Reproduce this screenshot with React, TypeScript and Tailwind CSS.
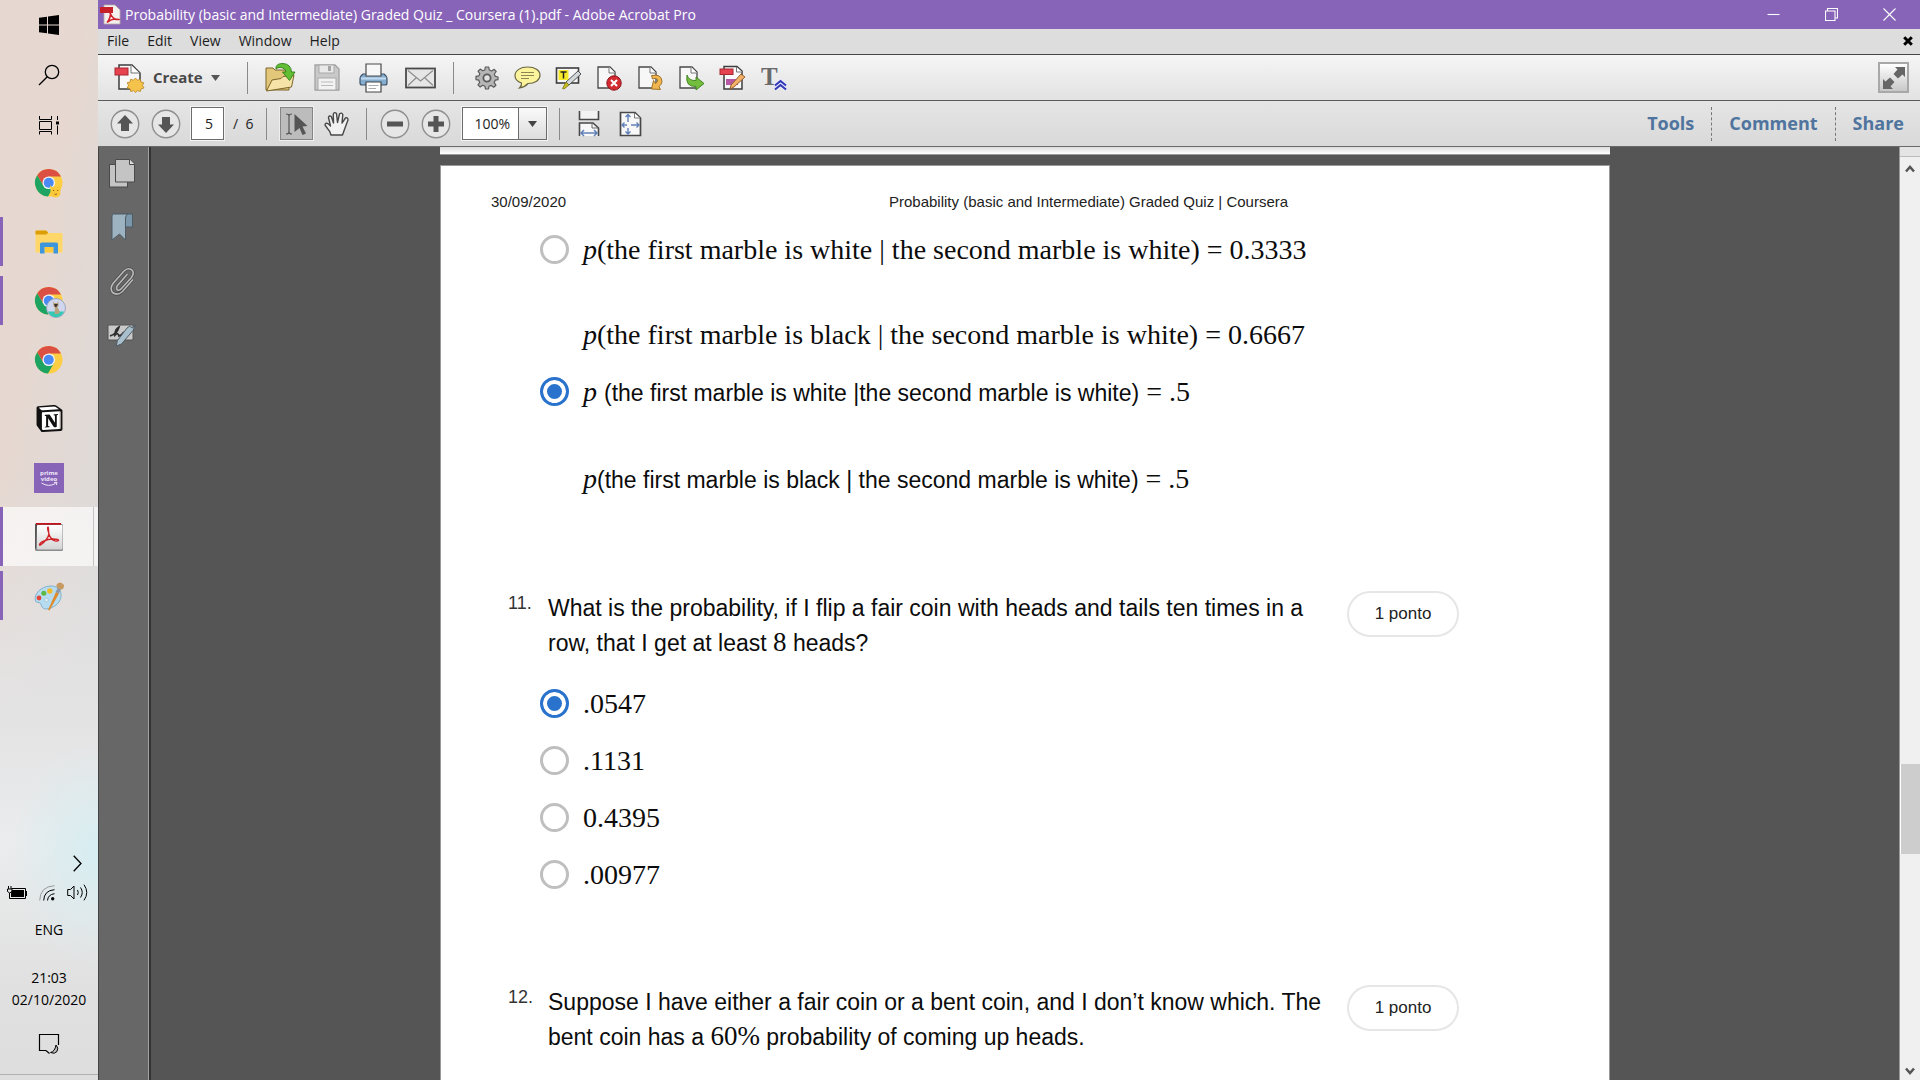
import React from "react";
import { SiNotion } from "react-icons/si";

const UI = "font-['Open_Sans','Noto_Sans',sans-serif]";
const SANS = "font-['Liberation_Sans',Arial,sans-serif]";
const SERIF = "font-['Liberation_Serif','Times_New_Roman',serif]";

/* ---------- Taskbar icons ---------- */

function Chrome({ children }: { children?: React.ReactNode }) {
  return (
    <svg width="34" height="34" viewBox="0 0 34 34" aria-hidden="true">
      <g transform="translate(3 3) scale(.573)">
        <circle cx="24" cy="24" r="24" fill="#fdce44" />
        <path d="M24 24V13.1H45.4A24 24 0 0 0 3.86 10.9L14.56 29.45Z" fill="#dc4f43" />
        <path d="M24 24L14.56 29.45L3.86 10.9A24 24 0 0 0 22.7 48L33.44 29.45Z" fill="#1da362" />
        <circle cx="24" cy="24" r="11" fill="#f4f4f4" />
        <circle cx="24" cy="24" r="8.7" fill="#4a8af4" />
      </g>
      {children}
    </svg>
  );
}

function WindowsLogo() {
  return (
    <svg width="20" height="20" viewBox="0 0 20 20" aria-hidden="true">
      <path d="M0 2.8L8 1.700V9.500H0ZM9 1.500L20 0V9.500H9ZM0 10.500H8V18.300L0 17.200ZM9 10.500H20V20L9 18.500Z" />
    </svg>
  );
}

function SearchIcon() {
  return (
    <svg width="22" height="22" viewBox="0 0 22 22" fill="none" stroke="#000" strokeWidth="1.3" aria-hidden="true">
      <circle cx="14" cy="8" r="6.700" />
      <path d="M9.300 12.700L1 21" />
    </svg>
  );
}

function TaskViewIcon() {
  return (
    <svg width="20" height="20" viewBox="0 0 20 20" fill="none" stroke="#000" aria-hidden="true">
      <path d="M.5 1V4.500H12.500V1M.5 19.500V16.500H12.500V19.500M.5 6.500H12.500V14.500H.5ZM18.500 1V5M18.500 10.500V19.500" />
      <rect x="17" y="6.500" width="3" height="3" fill="#000" stroke="none" />
    </svg>
  );
}

function FolderIcon() {
  return (
    <svg width="28" height="24" viewBox="0 0 28 24" aria-hidden="true">
      <path d="M.5 1.500Q.5 .5 1.500 .5H11L13.500 3H26.500Q27.500 3 27.500 4V22.500H.5Z" fill="#ffd768" />
      <path d="M.5 1.500Q.5 .5 1.500 .5H11L13.300 2.500L11.500 4.500H.5Z" fill="#dd9d05" />
      <path d="M5 23.500V14Q5 12.500 6.500 12.500H21.500Q23 12.500 23 14V23.500H18.500V17H9.500V23.500Z" fill="#3d96dc" />
      <rect x="10" y="17" width="8" height="5.500" fill="#ffc93c" />
    </svg>
  );
}

function PrimeIcon() {
  return (
    <svg width="30" height="30" viewBox="0 0 30 30" aria-hidden="true">
      <rect width="30" height="30" fill="#8864b8" />
      <text x="15" y="11.500" fontSize="6" fontWeight="700" textAnchor="middle" fill="#efe8f7" fontFamily="Open Sans">prime</text>
      <text x="15" y="18" fontSize="6" fontWeight="700" textAnchor="middle" fill="#efe8f7" fontFamily="Open Sans">video</text>
      <path d="M7.500 20Q14.500 24.500 21.500 20.500M20 19.500L23 19.300L22.300 22" fill="none" stroke="#efe8f7" strokeWidth="1" />
    </svg>
  );
}

const ACROBAT_A = "M14 5C12.500 5.500 14.600 10 15 12C14 16 10 20.500 6.500 23C4.500 24 5.500 20.800 9 19.300C13 17.500 19 16.500 23.500 17.500C26 18.200 24 19.600 21 18.800C18 17.800 15.500 14.500 14.800 11.500C14.300 9 15 6 14 5Z";

function AcrobatIcon() {
  return (
    <svg width="30" height="30" viewBox="0 0 30 30" aria-hidden="true">
      <defs>
        <linearGradient id="acro" x1="0" y1="0" x2="0" y2="1">
          <stop offset="0" stopColor="#fff" />
          <stop offset="1" stopColor="#d4d4d4" />
        </linearGradient>
      </defs>
      <rect x="1" y="2" width="28" height="27" rx="1.500" fill="#8b8b8b" />
      <rect x="3" y="3" width="25.500" height="24.500" rx="1" fill="url(#acro)" />
      <path d="M1 2.500L2 1H27V2.600H3L2 27L1 26Z" fill="#555" />
      <path d="M2 1H27V2.700H2Z" fill="#c3141c" />
      <path d={ACROBAT_A} fill="none" stroke="#cf2026" strokeWidth="1.300" />
    </svg>
  );
}

function PaintIcon() {
  return (
    <svg width="32" height="30" viewBox="0 0 32 30" aria-hidden="true">
      <path d="M2.500 20C.5 13 8 5.500 17 5C24 4.500 29 9 28 16C27 22.500 20 27.500 13 28C9 28 8.500 24.500 7.500 22.500C6 20.500 3.500 22.500 2.500 20Z" fill="#b5dcf1" stroke="#6ea4c4" strokeWidth=".8" />
      <circle cx="13.500" cy="19" r="1.700" fill="#eef6fa" stroke="#8ab" strokeWidth=".5" />
      <circle cx="6" cy="17" r="2.400" fill="#e2463b" />
      <circle cx="10.800" cy="12.300" r="2.500" fill="#5cb946" />
      <circle cx="16.800" cy="10" r="2.700" fill="#f3bb25" />
      <path d="M16.500 29.500L15 29L23 11L26 12.500Z" fill="#e08a2c" />
      <path d="M22.500 11L25 6.500L28 8L26 12.500Z" fill="#8d99a5" />
      <path d="M24.500 7C22 4.500 24 1.500 28 1.500L31 4C31 7 30 8.500 28 8.500Z" fill="#c79a63" />
    </svg>
  );
}

type TaskbarApp = { name: string; icon: React.ReactNode; running?: boolean; active?: boolean };

const APPS: TaskbarApp[] = [
  {
    name: "Chrome profile one",
    icon: (
      <Chrome>
        <path d="M18 19L20 21H26L27.500 18.500L28.500 25Q29 31 23.500 31.500Q17.500 31 18.500 25Z" fill="#fbc93a" />
        <path d="M21 24.500H22.200M25 24.500H26.200M22.500 28Q23.700 29 25 28" stroke="#9a5c12" strokeWidth="1" fill="none" />
      </Chrome>
    ),
  },
  { name: "File Explorer", icon: <FolderIcon />, running: true },
  {
    name: "Chrome profile two",
    icon: (
      <Chrome>
        <circle cx="24" cy="24" r="9.500" fill="#cfd6ee" stroke="#8e9bb5" strokeWidth=".8" />
        <path d="M15.800 27.500H32.200Q29.500 33 24 33.300Q18.500 33 15.800 27.500Z" fill="#35c9b4" />
        <path d="M21 17.500L22.500 19H25L26.500 17.500V22L25.500 23L28 28L26.500 30H22.500L23 24L21.500 22Z" fill="#b8a37f" />
        <path d="M22 20H26L24.500 23H23Z" fill="#3c3430" />
      </Chrome>
    ),
    running: true,
  },
  { name: "Chrome", icon: <Chrome /> },
  {
    name: "Notion",
    icon: (
      <span className="relative flex">
        <span className="absolute inset-x-1 inset-y-0.5 bg-white" />
        <SiNotion className="relative size-[27px] text-[#111]" />
      </span>
    ),
  },
  { name: "Prime Video", icon: <PrimeIcon /> },
  { name: "Adobe Acrobat", icon: <AcrobatIcon />, running: true, active: true },
  { name: "Paint", icon: <PaintIcon />, running: true },
];

function Taskbar() {
  return (
    <aside
      className={`${UI} flex w-[98px] shrink-0 flex-col bg-[radial-gradient(ellipse_90px_110px_at_100%_79%,#d6edf1_0%,transparent_100%),linear-gradient(180deg,transparent_0%,transparent_44%,#e4e4e5_68%,#ebeced_78%,#e0e0e0_92%,#dedede_100%),linear-gradient(100deg,#e6d8d1_30%,#d9dadb_85%)] text-[14px] text-black`}
    >
      {[
        { n: "Start", i: <WindowsLogo /> },
        { n: "Search", i: <SearchIcon /> },
        { n: "Task View", i: <TaskViewIcon /> },
      ].map((b) => (
        <button key={b.n} aria-label={b.n} className="flex h-[50px] items-center justify-center">
          {b.i}
        </button>
      ))}
      <nav className="mt-[3px] flex flex-col">
        {APPS.map((a) => (
          <button
            key={a.name}
            aria-label={a.name}
            className={`relative flex h-[59px] items-center justify-center ${a.active ? "bg-white/65" : ""}`}
          >
            {a.running && (
              <span className={`absolute left-0 w-[3px] bg-[#8864b8] ${a.active ? "inset-y-0" : "inset-y-[5px]"}`} />
            )}
            {a.active && <span className="absolute inset-y-0 right-1 w-px bg-[#c4c4c4]" />}
            {a.icon}
          </button>
        ))}
      </nav>
      <div className="mt-auto flex flex-col items-center">
        <button aria-label="Show hidden icons" className="mr-4 self-end">
          <svg width="9" height="17" viewBox="0 0 9 17" fill="none" stroke="#000" strokeWidth="1.3" aria-hidden="true">
            <path d="M.7 .7L8 8.500L.7 16.300" />
          </svg>
        </button>
        <div className="mt-3 flex items-center gap-3 pr-1">
          <svg width="20" height="14" viewBox="0 0 20 14" aria-hidden="true">
            <path d="M4.500 2.500H18.500V12.500H2.500V7" fill="none" stroke="#000" />
            <path d="M5 4H17V11H4V7Z" />
            <rect x="18.500" y="5" width="1.500" height="5" />
            <path d="M1.500 0V3M4 0V3M.5 3H5V5.500L2.700 7L.5 5.500Z" fill="none" stroke="#000" strokeWidth="1" />
          </svg>
          <svg width="16" height="16" viewBox="0 0 16 16" fill="none" stroke="#000" aria-hidden="true">
            <path d="M.7 15.500Q1 1.500 15.500 .7" stroke="#999" />
            <path d="M4.700 15.500Q5 5.500 15.500 4.700M8.500 15.500Q9 9.500 15.500 8.700" />
            <circle cx="13.700" cy="13.800" r="1.700" fill="#000" stroke="none" />
          </svg>
          <svg width="21" height="17" viewBox="0 0 21 17" fill="none" stroke="#000" aria-hidden="true">
            <path d="M.7 5.500H3.500L7 2V15L3.500 11.500H.7ZM10.500 6Q12 8.500 10.500 11M13.500 3.500Q17 8.500 13.500 13.500M17 .7Q22.500 8.500 17 16.300" />
          </svg>
        </div>
        <span className="mt-[18px] leading-[22px]">ENG</span>
        <span className="mt-[26px] leading-[22px]">21:03</span>
        <span className="leading-[22px]">02/10/2020</span>
        <button aria-label="Notifications" className="mt-[22px]">
          <svg width="22" height="22" viewBox="0 0 22 22" fill="none" stroke="#000" aria-hidden="true">
            <path d="M20.500 12V1.500H1.500V17.500H8L11.500 20.500" strokeWidth="1.200" />
            <path d="M18 12Q21 15 19 18.500Q16.500 21.500 12.500 19.500Q17 18.500 18 12Z" fill="#bbb" />
          </svg>
        </button>
        <div className="mt-[19px] mb-[5px] h-px w-full bg-[#b0b0b0]" />
      </div>
    </aside>
  );
}

/* ---------- Toolbar icons ---------- */

function Doc({ children }: { children?: React.ReactNode }) {
  return (
    <svg width="27" height="26" viewBox="0 0 27 26" aria-hidden="true">
      <path d="M2 2H14L19 7V23H2Z" fill="#f7f7f7" stroke="#484848" strokeWidth="1.300" />
      <path d="M13 2V8H19" fill="#fff" stroke="#777" strokeWidth="1" />
      {children}
    </svg>
  );
}

const CreateIcon = () => (
  <svg width="31" height="30" viewBox="0 0 31 30" aria-hidden="true">
    <path d="M5 2H18L26 10V26H5Z" fill="#f8f8f8" stroke="#3c3c3c" strokeWidth="1.500" />
    <path d="M17 2V10H25.500" fill="#fff" stroke="#777" />
    <rect x="1" y="5" width="13" height="7" fill="#e64250" stroke="#a82630" />
    <path d="M21.500 15L23.500 17.200L26.300 16.200L27 19L29.800 19.800L28.500 22.300L30 25L27.200 25.800L26.300 28.500L23.600 27.600L21.500 29.500L19.500 27.600L16.700 28.500L16 25.700L13.200 25L14.500 22.300L13.200 19.800L16 19L16.700 16.200L19.500 17.200Z" fill="#f5c24c" stroke="#b68421" strokeWidth=".8" />
  </svg>
);

const OpenIcon = () => (
  <svg width="32" height="31" viewBox="0 0 32 31" aria-hidden="true">
    <path d="M2 6H9L11 8H25V28H2Z" fill="#e2c67a" stroke="#7c6528" />
    <path d="M2.500 29L8 18L17 16.500L19 14.500L30 13L27.500 25Z" fill="#f6e3a8" stroke="#7c6528" strokeLinejoin="round" />
    <path d="M12 5Q13 1.500 19 1.500Q27 2 27.500 10H31L25.500 18.500L18.500 10H22Q21 5.500 16 5.500Q13.500 5.500 12 7Z" fill="#62bf34" stroke="#2f7d17" strokeWidth=".9" />
  </svg>
);

const SaveIcon = () => (
  <svg width="26" height="27" viewBox="0 0 26 27" aria-hidden="true">
    <path d="M1 1H21L25 5V26H1Z" fill="#c9c9c9" stroke="#a2a2a2" strokeWidth="1.300" />
    <path d="M5 1H20V9H5Z" fill="#e9e9e9" stroke="#a9a9a9" />
    <rect x="14" y="2" width="3" height="5" fill="#a5a5a5" />
    <rect x="4" y="14" width="18" height="12" fill="#f2f2f2" stroke="#aaa" />
    <path d="M7 18H19M7 21.500H19" stroke="#bbb" />
  </svg>
);

const PrintIcon = () => (
  <svg width="29" height="30" viewBox="0 0 29 30" aria-hidden="true">
    <path d="M4 11H25Q28 13 28 16V20Q28 22 26 22H3Q1 22 1 20V16Q1 13 4 11Z" fill="#85add0" stroke="#3e5267" strokeWidth="1.200" />
    <path d="M7 1H22V13H7Z" fill="#f7f7f7" stroke="#4a4a4a" strokeWidth="1.200" />
    <path d="M2 15.500H27" stroke="#c2daee" strokeWidth="2" />
    <path d="M7 19H22V29H7Z" fill="#fff" stroke="#454545" strokeWidth="1.200" />
    <path d="M9.500 22.500H19.500M9.500 25.500H17" stroke="#aaa" />
  </svg>
);

const MailIcon = () => (
  <svg width="31" height="22" viewBox="0 0 31 22" aria-hidden="true">
    <rect x="1" y="1.500" width="29" height="19" fill="#e6e6e6" stroke="#4a4a4a" strokeWidth="1.800" />
    <path d="M3 3.500L15.500 14L28 3.500M3 18.500L11.500 10.500M28 18.500L19.500 10.500" fill="none" stroke="#8d8d8d" strokeWidth="1.200" />
  </svg>
);

const GearIcon = () => (
  <svg width="24" height="24" viewBox="0 0 24 24" aria-hidden="true">
    <path d="M10.300 1H13.700L14.300 4L16.700 5L19.200 3.300L21.200 5.500L19.300 8L20.200 10.300L23 11V13.700L20.200 14.200L19.200 16.600L20.900 19.200L18.700 21.200L16.200 19.400L14 20.200L13.500 23H10.500L9.900 20.200L7.600 19.300L5.200 21L3 18.900L4.700 16.500L3.800 14.200L1 13.600V10.400L3.900 9.900L4.800 7.600L3.100 5.200L5.200 3.100L7.700 4.800L9.800 4Z" fill="#b6b6b6" stroke="#5a5a5a" strokeWidth="1.200" strokeLinejoin="round" />
    <circle cx="12" cy="12" r="3.600" fill="#e2e2e2" stroke="#5a5a5a" strokeWidth="1.800" />
  </svg>
);

const CommentIcon = () => (
  <svg width="27" height="23" viewBox="0 0 27 23" aria-hidden="true">
    <path d="M13.500 1C21 1 26 4.500 26 9.300S21 17.500 14 17.500Q11 21 5.500 22Q8 19.500 7.500 17Q1 15 1 9.500C1 4.500 6.500 1 13.500 1Z" fill="#fbf49c" stroke="#6b6642" strokeWidth="1.200" />
    <path d="M7 6.500H20M7 9.500H20M7 12.500H15" stroke="#8c8655" />
  </svg>
);

const HighlightIcon = () => (
  <svg width="27" height="24" viewBox="0 0 27 24" aria-hidden="true">
    <rect x="1.500" y="2" width="22" height="15" fill="#f7f7f7" stroke="#3d3d3d" strokeWidth="1.600" />
    <rect x="3.500" y="4" width="10" height="10" fill="#f8ea2a" />
    <path d="M5.500 6H11.500M8.500 6V12.500" stroke="#222" strokeWidth="1.500" />
    <path d="M23 5L26 8L14 19L11 16Z" fill="#d5d8da" stroke="#4f5355" />
    <path d="M11 16L14 19L9 23L7.500 22.500Z" fill="#c9bd1f" stroke="#77701a" strokeWidth=".8" />
  </svg>
);

const DeleteIcon = () => (
  <Doc>
    <circle cx="18" cy="18" r="7.200" fill="#d42a32" stroke="#8c1218" />
    <path d="M15 15L21 21M21 15L15 21" stroke="#fff" strokeWidth="2" />
  </Doc>
);

const RotateIcon = () => (
  <Doc>
    <path d="M14.500 10.500Q24.500 8.500 25 16.500Q24.800 19.500 22 21.500L23.500 24.500L14.500 24L16.500 15.500L18.500 18.500Q21.500 16.500 20.500 14.500Q18.500 12.500 15.500 14Z" fill="#f0b650" stroke="#9a6a1c" strokeWidth=".9" />
  </Doc>
);

const ExtractIcon = () => (
  <Doc>
    <path d="M9 10Q11 16 18 15.500V12L26 18.500L18 25V21.500Q7 22 9 10Z" fill="#74be3d" stroke="#3a7d1b" strokeWidth=".9" />
  </Doc>
);

const EditIcon = () => (
  <svg width="27" height="26" viewBox="0 0 27 26" aria-hidden="true">
    <path d="M5 1.500H18L23 6V24H5Z" fill="#fafafa" stroke="#3c3c3c" strokeWidth="1.500" />
    <path d="M17.500 2V7H23" fill="#fff" stroke="#777" />
    <rect x="1" y="4" width="13" height="5.500" fill="#e64250" stroke="#a82630" />
    <rect x="7" y="14" width="12" height="6" fill="#b658a4" />
    <path d="M22 9L26 12L15 22L11 24L12 20Z" fill="#f2b168" stroke="#8c5420" strokeWidth=".9" />
  </svg>
);

const TextIcon = () => (
  <svg width="26" height="32" viewBox="0 -5 26 32" aria-hidden="true">
    <text x="0" y="18" fontSize="25" fontWeight="700" fill="#6a6a6a" fontFamily="Liberation Serif">T</text>
    <path d="M14 18.500L19.500 14L25 18.500M14 22.500L19.500 18L25 22.500" fill="none" stroke="#e8e8ff" strokeWidth="3.500" />
    <path d="M14 18.500L19.500 14L25 18.500M14 22.500L19.500 18L25 22.500" fill="none" stroke="#3038b4" strokeWidth="2" />
  </svg>
);

const Arrow = ({ down }: { down?: boolean }) => (
  <svg width="30" height="30" viewBox="0 0 30 30" aria-hidden="true">
    <circle cx="15" cy="15" r="13.700" fill="#e6e6e6" stroke="#8f8f8f" strokeWidth="1.400" />
    <path d="M15 6L23 14.500H19V22H11V14.500H7Z" fill="#555" transform={down ? "rotate(180 15 15)" : undefined} />
  </svg>
);

const ZoomCircle = ({ plus }: { plus?: boolean }) => (
  <svg width="30" height="30" viewBox="0 0 30 30" aria-hidden="true">
    <circle cx="15" cy="15" r="13.700" fill="#e6e6e6" stroke="#8f8f8f" strokeWidth="1.400" />
    <path d="M7 12.500H23V17.500H7Z" fill="#555" />
    {plus && <path d="M12.500 7H17.500V23H12.500Z" fill="#555" />}
  </svg>
);

const SelectIcon = () => (
  <svg width="24" height="24" viewBox="0 0 24 24" aria-hidden="true">
    <path d="M1 2Q4 2 4 4V20Q4 22 1 22M7 2Q4 2 4 4M4 20Q4 22 7 22" fill="none" stroke="#555" strokeWidth="1.200" />
    <path d="M9.500 2L22.500 14L17.500 14.500L21 21.500L17.500 23L14.500 16L9.500 20Z" fill="#555" />
  </svg>
);

const HandIcon = () => (
  <svg width="26" height="26" viewBox="0 0 26 26" aria-hidden="true">
    <path d="M7 24Q6 20 3.500 17.500L1 14Q1.500 11 4.500 13L6.500 15L4.500 6.500Q5 4 7.300 5.500L9.500 12L9.300 3Q10.500 .5 12.500 2.500L13.500 11.500L15.500 3Q17.500 1 18.800 3.500L18 12L21.500 7Q24 6 24 9L21 17L18.500 24Z" fill="#f1f1f1" stroke="#484848" strokeWidth="1.400" strokeLinejoin="round" />
  </svg>
);

const FitWidthIcon = () => (
  <svg width="22" height="26" viewBox="0 0 22 26" aria-hidden="true">
    <path d="M1.500 0V8.500H20.500V0" fill="#f3f3f3" stroke="#484848" strokeWidth="1.600" />
    <path d="M1.500 25V12H15L20.500 17V25" fill="#f8f8f8" stroke="#484848" strokeWidth="1.600" />
    <path d="M14 12V17H20" fill="none" stroke="#666" />
    <path d="M3 22H19M6 19L3 22L6 25M16 19L19 22L16 25" fill="none" stroke="#6280b8" strokeWidth="1.500" />
  </svg>
);

const FitPageIcon = () => (
  <svg width="23" height="26" viewBox="0 0 23 26" aria-hidden="true">
    <path d="M1.500 1.500H16L21.500 7V24.500H1.500Z" fill="#f8f8f8" stroke="#484848" strokeWidth="1.700" />
    <path d="M15.500 2V7H21" fill="#fff" stroke="#777" />
    <path d="M9 3.500V11M6.500 6L9 3.500L11.500 6M9 17V23M6.500 20.500L9 23L11.500 20.500M3 14H8M5.500 11.500L3 14L5.500 16.500M12 14H20M17.500 11.500L20 14L17.500 16.500" fill="none" stroke="#6280b8" strokeWidth="1.400" />
  </svg>
);

const FullscreenIcon = () => (
  <svg width="24" height="24" viewBox="0 0 24 24" fill="#666" aria-hidden="true">
    <path d="M13 1H23V11L20.500 8.500L16 12.500L11.500 8L15.500 3.500Z" />
    <path d="M1 13V23H11L8.500 20.500L12.500 16L8 11.500L3.500 15.500Z" />
  </svg>
);

/* ---------- Window chrome ---------- */

function TitleBar() {
  return (
    <header className="flex h-[29px] items-center bg-[#8864b8] pl-[2px] text-white">
      <svg width="21" height="22" viewBox="0 0 21 22" aria-hidden="true">
        <path d="M4 1H15L20 6V20H4Z" fill="#f4f0ee" stroke="#b9a9a5" strokeWidth=".8" />
        <path d="M0 3H13V9H0Z" fill="#c8202b" />
        <path d="M10 7C9 8 11 12 14 14.500Q17 16 18.500 15.500Q13 13.500 7 18.500Q11 14 10.500 7" fill="none" stroke="#d01f28" strokeWidth="1.500" />
      </svg>
      <h1 className="ml-1 text-[14px] leading-5">
        Probability (basic and Intermediate) Graded Quiz _ Coursera (1).pdf - Adobe Acrobat Pro
      </h1>
      <div className="mr-0.5 ml-auto flex self-stretch">
        {[
          { n: "Minimize", d: "M.5 6.500H12.500" },
          { n: "Restore", d: "M.5 3H10V12.500H.5ZM2.500 3V.5H12.500V10H10" },
          { n: "Close", d: "M.5 .5L12.500 12.500M12.500 .5L.5 12.500" },
        ].map((b) => (
          <button key={b.n} aria-label={b.n} className="flex w-[58px] items-center justify-center">
            <svg width="13" height="13" viewBox="0 0 13 13" fill="none" stroke="#fff" strokeWidth="1.100" aria-hidden="true">
              <path d={b.d} />
            </svg>
          </button>
        ))}
      </div>
    </header>
  );
}

function MenuBar() {
  return (
    <div className="flex h-[25px] items-center bg-[#dddddd] pr-[7px] pb-0.5 pl-[9px] text-[14px] text-[#1c1c1c]">
      <nav className="flex gap-[18px]">
        {["File", "Edit", "View", "Window", "Help"].map((m) => (
          <button key={m} className="leading-5">{m}</button>
        ))}
      </nav>
      <button aria-label="Close document" className="ml-auto">
        <svg width="10" height="10" viewBox="0 0 10 10" stroke="#000" strokeWidth="3" aria-hidden="true">
          <path d="M1.200 1.200L8.800 8.800M8.800 1.200L1.200 8.800" />
        </svg>
      </button>
    </div>
  );
}

const Sep = () => <span className="h-8 w-px shrink-0 bg-[#8a8a8a]" />;

function MainToolbar() {
  const files = [
    { n: "Open", i: <OpenIcon /> },
    { n: "Save", i: <SaveIcon /> },
    { n: "Print", i: <PrintIcon /> },
    { n: "Email", i: <MailIcon /> },
  ];
  const tools = [
    { n: "Preferences", i: <GearIcon /> },
    { n: "Add note", i: <CommentIcon /> },
    { n: "Highlight", i: <HighlightIcon /> },
    { n: "Delete pages", i: <DeleteIcon /> },
    { n: "Rotate pages", i: <RotateIcon /> },
    { n: "Extract pages", i: <ExtractIcon /> },
    { n: "Edit document", i: <EditIcon /> },
    { n: "Recognize text", i: <TextIcon /> },
  ];
  return (
    <div className="flex h-[47px] items-center border-t border-b border-t-[#454545] border-b-[#5c5c5c] bg-linear-to-b from-[#f5f5f5] to-[#e2e2e2] pr-[11px] pl-4">
      <button className="flex w-[133px] items-center text-[15px] font-bold text-[#484848]">
        <CreateIcon />
        <span className="ml-2">Create</span>
        <svg width="9" height="6" viewBox="0 0 9 6" className="ml-2" aria-hidden="true">
          <path d="M0 0H9L4.500 6Z" fill="#555" />
        </svg>
      </button>
      <Sep />
      <div className="ml-2 flex">
        {files.map((b) => (
          <button key={b.n} aria-label={b.n} className="flex w-[47px] items-center justify-center">{b.i}</button>
        ))}
      </div>
      <span className="ml-[9px]" />
      <Sep />
      <div className="ml-3 flex">
        {tools.map((b) => (
          <button key={b.n} aria-label={b.n} className="flex w-[41px] items-center justify-center">{b.i}</button>
        ))}
      </div>
      <button
        aria-label="Read mode"
        className="ml-auto flex size-[31px] items-center justify-center border-2 border-[#a8a8a8] bg-linear-to-b from-white to-[#c8c8c8]"
      >
        <FullscreenIcon />
      </button>
    </div>
  );
}

function NavToolbar() {
  return (
    <div className="flex h-[46px] items-center border-b border-[#6a6a6a] bg-linear-to-b from-[#e5e5e5] to-[#d9d9d9] pr-4 pl-3 text-[14px] text-[#222]">
      <button aria-label="Previous page"><Arrow /></button>
      <button aria-label="Next page" className="ml-[11px]"><Arrow down /></button>
      <input
        aria-label="Page number"
        defaultValue="5"
        className="ml-[10px] h-[33px] w-[33px] border border-[#6c6c6c] bg-white pl-[3px] text-center outline outline-[#f4f4f4]"
      />
      <span className="ml-[9px]">/&nbsp; 6</span>
      <span className="w-[13px]" />
      <Sep />
      <button aria-label="Selection tool" className="ml-[13px] flex size-[33px] items-center justify-center border border-[#858585] bg-[#bcbcbc] outline outline-[#efefef]">
        <SelectIcon />
      </button>
      <button aria-label="Hand tool" className="ml-[11px]"><HandIcon /></button>
      <span className="w-4" />
      <Sep />
      <button aria-label="Zoom out" className="ml-[13px]"><ZoomCircle /></button>
      <button aria-label="Zoom in" className="ml-[11px]"><ZoomCircle plus /></button>
      <div className="relative ml-[11px] flex h-[33px] w-[85px] border border-[#6c6c6c] bg-linear-to-b from-[#fafafa] to-[#dddddd] outline outline-[#f4f4f4]">
        <select aria-label="Zoom level" className="w-full appearance-none bg-[linear-gradient(#fff,#fff)] bg-size-[56px_100%] bg-no-repeat pl-[11px] text-[14px]">
          <option>100%</option>
        </select>
        <span className="pointer-events-none absolute inset-y-0 right-0 flex w-7 items-center justify-center border-l border-[#6c6c6c]">
          <svg width="9" height="6" viewBox="0 0 9 6" aria-hidden="true"><path d="M0 0H9L4.500 6Z" fill="#444" /></svg>
        </span>
      </div>
      <span className="w-3" />
      <Sep />
      <button aria-label="Fit width" className="ml-[18px]"><FitWidthIcon /></button>
      <button aria-label="Fit page" className="ml-[19px]"><FitPageIcon /></button>
      <nav className="ml-auto flex items-center text-[18px] font-bold text-[#4f749e]">
        <button>Tools</button>
        <span className="mx-[17px] h-[34px] border-l border-dashed border-[#777]" />
        <button>Comment</button>
        <span className="mx-[17px] h-[34px] border-l border-dashed border-[#777]" />
        <button>Share</button>
      </nav>
    </div>
  );
}

function SidePanel() {
  return (
    <aside className="flex w-[53px] shrink-0 flex-col items-center border-r-2 border-l border-r-[#323232] border-l-[#444] bg-[#676767] pr-1 shadow-[inset_-1px_0_#a0a0a0]">
      <button aria-label="Pages" className="mt-[11px] flex h-[30px] items-center">
        <svg width="26" height="29" viewBox="0 0 26 29" fill="#c4c4c4" stroke="#4a4a4a" aria-hidden="true">
          <rect x=".5" y="5.500" width="18" height="22.500" />
          <path d="M6.500 .5H21L25.500 5V23H6.500Z" />
          <path d="M20.500 .5V5.500H25.500" fill="#ddd" />
        </svg>
      </button>
      <button aria-label="Bookmarks" className="mt-6 flex h-[30px] items-center">
        <svg width="22" height="28" viewBox="0 0 22 28" stroke="#4d5b65" aria-hidden="true">
          <path d="M14 1H21.500V14H14Z" fill="#7b97ab" />
          <path d="M2.500 1H17Q14.500 2 14.500 5V27L8.500 21L1 27V3Q1 1 2.500 1Z" fill="#9db3c1" />
        </svg>
      </button>
      <button aria-label="Attachments" className="mt-6 flex h-[30px] items-center">
        <svg width="26" height="29" viewBox="0 0 26 29" fill="none" aria-hidden="true">
          <path d="M18.500 7L8.500 18.500Q6.500 21.500 8.500 23Q10.500 24 12.500 21.500L22.500 10.500Q26 5.500 22.500 2.700Q18.500 .3 15 4L4 16.500Q.5 21.500 3.500 25.500Q8 29 13 25L24 12.500" stroke="#4a4a4a" strokeWidth="3" />
          <path d="M18.500 7L8.500 18.500Q6.500 21.500 8.500 23Q10.500 24 12.500 21.500L22.500 10.500Q26 5.500 22.500 2.700Q18.500 .3 15 4L4 16.500Q.5 21.500 3.500 25.500Q8 29 13 25L24 12.500" stroke="#b9b9b9" strokeWidth="1.600" />
        </svg>
      </button>
      <button aria-label="Signatures" className="mt-6 flex h-[30px] items-center">
        <svg width="30" height="24" viewBox="0 0 30 24" aria-hidden="true">
          <path d="M1 2H26V17H1Z" fill="#c9c9c9" stroke="#555" />
          <path d="M3 13Q10 11 12 4Q8 6 8 12Q11 9 12 13Q15 12 17 9" fill="none" stroke="#2d2d2d" strokeWidth="1.800" />
          <path d="M25.500 5L28.500 2L26 7.500L14.500 21L9 23L10.500 17.500L20 5Q23 2 24 4Z" fill="#a9c0cc" stroke="#4d5b65" />
        </svg>
      </button>
    </aside>
  );
}

/* ---------- Document ---------- */

function Radio({ name, checked }: { name: string; checked?: boolean }) {
  return (
    <input
      type="radio"
      name={name}
      defaultChecked={checked}
      className="size-[29px] shrink-0 appearance-none rounded-full border-[3px] border-[#bfbfbf] bg-white checked:border-[#2a73cc] checked:bg-[#2a73cc] checked:shadow-[inset_0_0_0_4px_white]"
    />
  );
}

function Question({ number, lines }: { number: string; lines: React.ReactNode[] }) {
  return (
    <div className="flex items-start">
      <span className="w-10 text-[18px] leading-[25px] text-[#333]">{number}</span>
      <p className="w-[799px] text-[23px] leading-[35px]">
        {lines.map((l, i) => (
          <span key={i} className="block h-[35px]">{l}</span>
        ))}
      </p>
      <span className="flex h-[46px] w-28 items-center justify-center rounded-full border-2 border-[#e6e6e6] text-[17px] text-[#222]">
        1 ponto
      </span>
    </div>
  );
}

function Page() {
  return (
    <article className={`${SANS} flex-1 border-x border-t border-[#999] bg-white pt-[26px] text-[#0c0c0c]`}>
      <div className="flex pl-[50px] text-[15px] leading-5 text-[#222]">
        <span className="w-[398px]">30/09/2020</span>
        <span>Probability (basic and Intermediate) Graded Quiz | Coursera</span>
      </div>

      <fieldset className={`${SERIF} mt-5 ml-[99px] text-[28px] leading-[35px]`}>
        <label className="flex items-start gap-[14px]">
          <span className="flex h-[35px] items-center"><Radio name="q10" /></span>
          <span className="flex flex-col gap-[50px]">
            <span className="h-[35px]"><i>p</i>(the first marble is white | the second marble is white) = 0.3333</span>
            <span className="h-[35px]"><i>p</i>(the first marble is black | the second marble is white) = 0.6667</span>
          </span>
        </label>
        <label className="mt-[22px] flex items-start gap-[14px]">
          <span className="flex h-[35px] items-center"><Radio name="q10" checked /></span>
          <span className="flex flex-col gap-[52px]">
            <span className="h-[35px]">
              <i>p</i> <span className={`${SANS} text-[23px]`}>(the first marble is white |the second marble is white)</span> = .5
            </span>
            <span className="h-[35px]">
              <i>p</i><span className={`${SANS} text-[23px]`}>(the first marble is black | the second marble is white)</span> = .5
            </span>
          </span>
        </label>
      </fieldset>

      <section className="mt-[95px] ml-[67px]">
        <Question
          number="11."
          lines={[
            "What is the probability, if I flip a fair coin with heads and tails ten times in a",
            <>row, that I get at least <span className={`${SERIF} text-[27px] leading-none`}>8</span> heads?</>,
          ]}
        />
        <fieldset className={`${SERIF} mt-[14px] ml-8 text-[28px]`}>
          {[".0547", ".1131", "0.4395", ".00977"].map((o, i) => (
            <label key={o} className="flex h-[57px] items-center gap-[14px] leading-[35px]">
              <Radio name="q11" checked={i === 0} />
              <span>{o}</span>
            </label>
          ))}
        </fieldset>
      </section>

      <section className="mt-[82px] ml-[67px]">
        <Question
          number="12."
          lines={[
            "Suppose I have either a fair coin or a bent coin, and I don’t know which. The",
            <>bent coin has a <span className={`${SERIF} text-[27px] leading-none`}>60%</span> probability of coming up heads.</>,
          ]}
        />
      </section>
    </article>
  );
}

function ScrollBar() {
  return (
    <div className="flex w-[21px] shrink-0 flex-col items-center border-l border-[#999] bg-[#f0f0f0]">
      <div className="h-[10px] w-full border-b border-[#bbb] bg-[#e4e4e4]" />
      <button aria-label="Scroll up" className="mt-2">
        <svg width="10" height="8" viewBox="0 0 10 8" fill="none" stroke="#555" strokeWidth="2.500" aria-hidden="true"><path d="M1 6.500L5 2L9 6.500" /></svg>
      </button>
      <div className="flex-[589]" />
      <div className="w-full flex-[90] border-l border-white bg-[#cdcdcd]" />
      <div className="flex-[212]" />
      <button aria-label="Scroll down" className="mb-[5px]">
        <svg width="10" height="8" viewBox="0 0 10 8" fill="none" stroke="#555" strokeWidth="2.500" aria-hidden="true"><path d="M1 1.500L5 6L9 1.500" /></svg>
      </button>
    </div>
  );
}

export default function App() {
  return (
    <div className="flex h-screen overflow-hidden">
      <Taskbar />
      <div className={`${UI} flex min-w-0 flex-1 flex-col`}>
        <TitleBar />
        <MenuBar />
        <MainToolbar />
        <NavToolbar />
        <div className="flex min-h-0 flex-1">
          <SidePanel />
          <main className="flex min-w-0 flex-1 justify-center overflow-hidden bg-[#555]">
            <div className="flex w-full max-w-[1170px] flex-col">
              <div className="mb-[10px] h-2 shrink-0 border-b border-[#999] bg-linear-to-b from-[#dcdcdc] to-white" />
              <Page />
            </div>
          </main>
          <ScrollBar />
        </div>
      </div>
    </div>
  );
}
